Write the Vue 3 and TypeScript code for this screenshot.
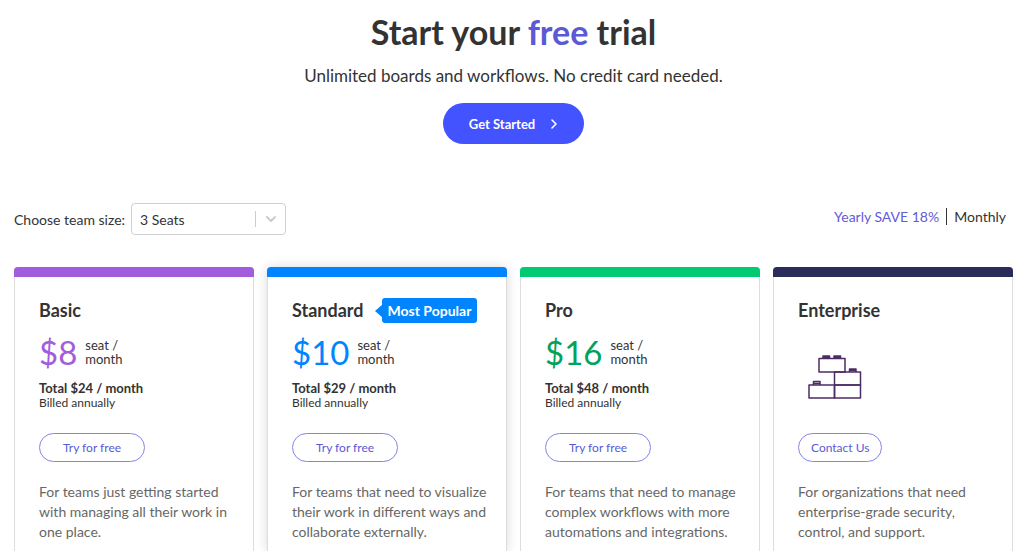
<script setup lang="ts">
import { ref } from 'vue'

interface Plan {
  id: string
  name: string
  price?: string
  total?: string
  badge?: string
  action: string
  description: string
}

const seats = ref('3')
const billing = ref<'yearly' | 'monthly'>('yearly')

const plans: Plan[] = [
  { id: 'basic', name: 'Basic', price: '$8', total: 'Total $24 / month', action: 'Try for free', description: 'For teams just getting started\nwith managing all their work in\none place.' },
  { id: 'standard', name: 'Standard', price: '$10', total: 'Total $29 / month', badge: 'Most Popular', action: 'Try for free', description: 'For teams that need to visualize\ntheir work in different ways and\ncollaborate externally.' },
  { id: 'pro', name: 'Pro', price: '$16', total: 'Total $48 / month', action: 'Try for free', description: 'For teams that need to manage\ncomplex workflows with more\nautomations and integrations.' },
  { id: 'enterprise', name: 'Enterprise', action: 'Contact Us', description: 'For organizations that need\nenterprise-grade security,\ncontrol, and support.' },
]
</script>

<template>
  <main class="page">
    <header class="hero">
      <h1>Start your <span class="accent">free</span> trial</h1>
      <p>Unlimited boards and workflows. No credit card needed.</p>
      <button class="start" type="button">
        Get Started
        <svg width="8" height="12" viewBox="0 0 8 12" aria-hidden="true">
          <path d="M2 2l4 4-4 4" fill="none" stroke="currentColor" stroke-width="1.6" stroke-linecap="round" stroke-linejoin="round" />
        </svg>
      </button>
    </header>

    <section class="controls">
      <div class="team">
        <label for="seats">Choose team size:</label>
        <div class="select">
          <select id="seats" v-model="seats">
            <option value="3">3 Seats</option>
            <option value="5">5 Seats</option>
            <option value="10">10 Seats</option>
          </select>
          <span class="indicator" aria-hidden="true">
            <svg width="12" height="8" viewBox="0 0 12 8">
              <path d="M2 2l4 4 4-4" fill="none" stroke="#ccc" stroke-width="2" stroke-linecap="round" stroke-linejoin="round" />
            </svg>
          </span>
        </div>
      </div>
      <div class="billing">
        <button type="button" :class="{ active: billing === 'yearly' }" @click="billing = 'yearly'">Yearly SAVE 18%</button>
        <span class="divider"></span>
        <button type="button" :class="{ active: billing === 'monthly' }" @click="billing = 'monthly'">Monthly</button>
      </div>
    </section>

    <section class="plans">
      <article v-for="plan in plans" :key="plan.id" class="card" :class="plan.id">
        <div class="title">
          <h2>{{ plan.name }}</h2>
          <span v-if="plan.badge" class="badge">{{ plan.badge }}</span>
        </div>
        <div class="offer">
          <template v-if="plan.price">
            <div class="price">
              <span class="amount">{{ plan.price }}</span>
              <span class="unit">seat /<br />month</span>
            </div>
            <div class="total">{{ plan.total }}</div>
            <div class="billed">Billed annually</div>
          </template>
          <svg v-else class="bricks" width="54" height="46" viewBox="0 0 54 46" fill="none" stroke="#4b2c63" stroke-width="1.5" stroke-linejoin="round" aria-hidden="true">
            <rect x="11" y="4.500" width="26" height="13.500" />
            <rect x="26.500" y="18" width="26" height="13" />
            <rect x="1" y="31" width="25.500" height="13" />
            <rect x="26.500" y="31" width="26" height="13" />
            <path d="M15 4.500V2H21.500V4.500M26 4.500V2H32.500V4.500M41.500 18V15H48V18M5.500 31V27.500H12V31M15 3.500H21.500M26 3.500H32.500M41.500 16.500H48M5.500 29.500H12" />
          </svg>
        </div>
        <button class="action" type="button">{{ plan.action }}</button>
        <p class="description">{{ plan.description }}</p>
      </article>
    </section>
  </main>
</template>

<style>
body {
  margin: 0;
  background: #fff;
}
</style>

<style scoped>
.page {
  box-sizing: border-box;
  display: flex;
  flex-direction: column;
  min-height: 100vh;
  padding: 10px 11px 0 14px;
  color: #333;
  font-family: Lato, "Liberation Sans", sans-serif;
}

button,
select {
  font-family: inherit;
  cursor: pointer;
}

.hero {
  display: flex;
  flex-direction: column;
  align-items: center;
}

h1 {
  margin: 0;
  font-size: 34px;
  font-weight: 700;
  line-height: 44px;
}

.accent {
  color: #595ad4;
}

.hero p {
  margin: 10px 0 15px;
  font-size: 17px;
  line-height: 24px;
}

.start {
  display: flex;
  align-items: center;
  gap: 15px;
  height: 41px;
  padding: 0 26px;
  border: 0;
  border-radius: 21px;
  background: #4353ff;
  color: #fff;
  font-size: 13px;
  font-weight: 700;
}

.controls {
  display: flex;
  justify-content: space-between;
  margin-top: 59px;
}

.team {
  display: flex;
  align-items: center;
  gap: 6px;
  font-size: 14px;
}

.select {
  display: grid;
  width: 155px;
}

.select select,
.indicator {
  grid-area: 1 / 1;
}

.select select {
  height: 32px;
  padding: 0 40px 0 8px;
  border: 1px solid #d0d0d0;
  border-radius: 4px;
  background: #fff;
  color: #333;
  font-size: 14px;
  appearance: none;
}

.indicator {
  display: grid;
  place-items: center;
  justify-self: end;
  align-self: center;
  width: 30px;
  height: 16px;
  border-left: 1px solid #ccc;
  pointer-events: none;
}

.billing {
  display: flex;
  align-items: center;
  height: 26px;
  gap: 7px;
  padding-right: 7px;
}

.billing button {
  padding: 0;
  border: 0;
  background: none;
  color: #333;
  font-size: 14px;
}

.billing .active {
  color: #5f5cd8;
}

.divider {
  width: 1px;
  height: 17px;
  background: #333;
}

.plans {
  display: grid;
  grid-template-columns: repeat(4, minmax(0, 1fr));
  flex: 1;
  gap: 13px;
  margin-top: 32px;
}

.card {
  padding: 0 24px;
  border: 1px solid #ddd;
  border-bottom: 0;
  border-radius: 4px 4px 0 0;
  background: #fff;
}

.card::before {
  content: "";
  display: block;
  height: 10px;
  margin: -1px -25px 0;
  border-radius: 4px 4px 0 0;
}

.basic::before {
  background: #a25ddc;
}

.standard::before {
  background: #0085ff;
}

.pro::before {
  background: #00ca72;
}

.enterprise::before {
  background: #2b2c5c;
}

.standard {
  box-shadow: 0 0 12px rgba(0, 0, 0, 0.15);
}

.title {
  display: flex;
  align-items: center;
  gap: 18px;
  height: 26px;
  margin-top: 20px;
  white-space: nowrap;
}

h2 {
  margin: 0;
  font-size: 18px;
  font-weight: 700;
  line-height: 26px;
}

.badge {
  position: relative;
  padding: 0 6px;
  border-radius: 3px;
  background: #0085ff;
  color: #fff;
  font-size: 14px;
  font-weight: 700;
  line-height: 25px;
}

.badge::before {
  content: "";
  position: absolute;
  top: 6px;
  left: -7px;
  border: solid transparent;
  border-width: 7px 8px 7px 0;
  border-right-color: #0085ff;
}

.offer {
  height: 88px;
  margin-top: 7px;
}

.price {
  display: flex;
  align-items: center;
  gap: 8px;
  height: 44px;
}

.amount {
  font-size: 33px;
  line-height: 44px;
}

.unit {
  font-size: 13px;
  line-height: 14px;
}

.basic .amount {
  color: #a25ddc;
}

.standard .amount {
  color: #0085ff;
}

.pro .amount {
  color: #03a25b;
}

.total {
  margin-top: 7px;
  font-size: 13px;
  font-weight: 700;
  line-height: 15px;
}

.billed {
  font-size: 12px;
  line-height: 14px;
}

.bricks {
  display: block;
  margin: 0 10px;
  padding-top: 24px;
}

.action {
  height: 29px;
  margin-top: 15px;
  padding: 0 23px;
  border: 1px solid #8583e8;
  border-radius: 15px;
  background: #fff;
  color: #595ad4;
  font-size: 12px;
}

.enterprise .action {
  padding: 0 12px;
}

.description {
  margin: 20px 0 0;
  color: #676767;
  font-size: 14px;
  line-height: 20px;
  white-space: pre;
}
</style>
